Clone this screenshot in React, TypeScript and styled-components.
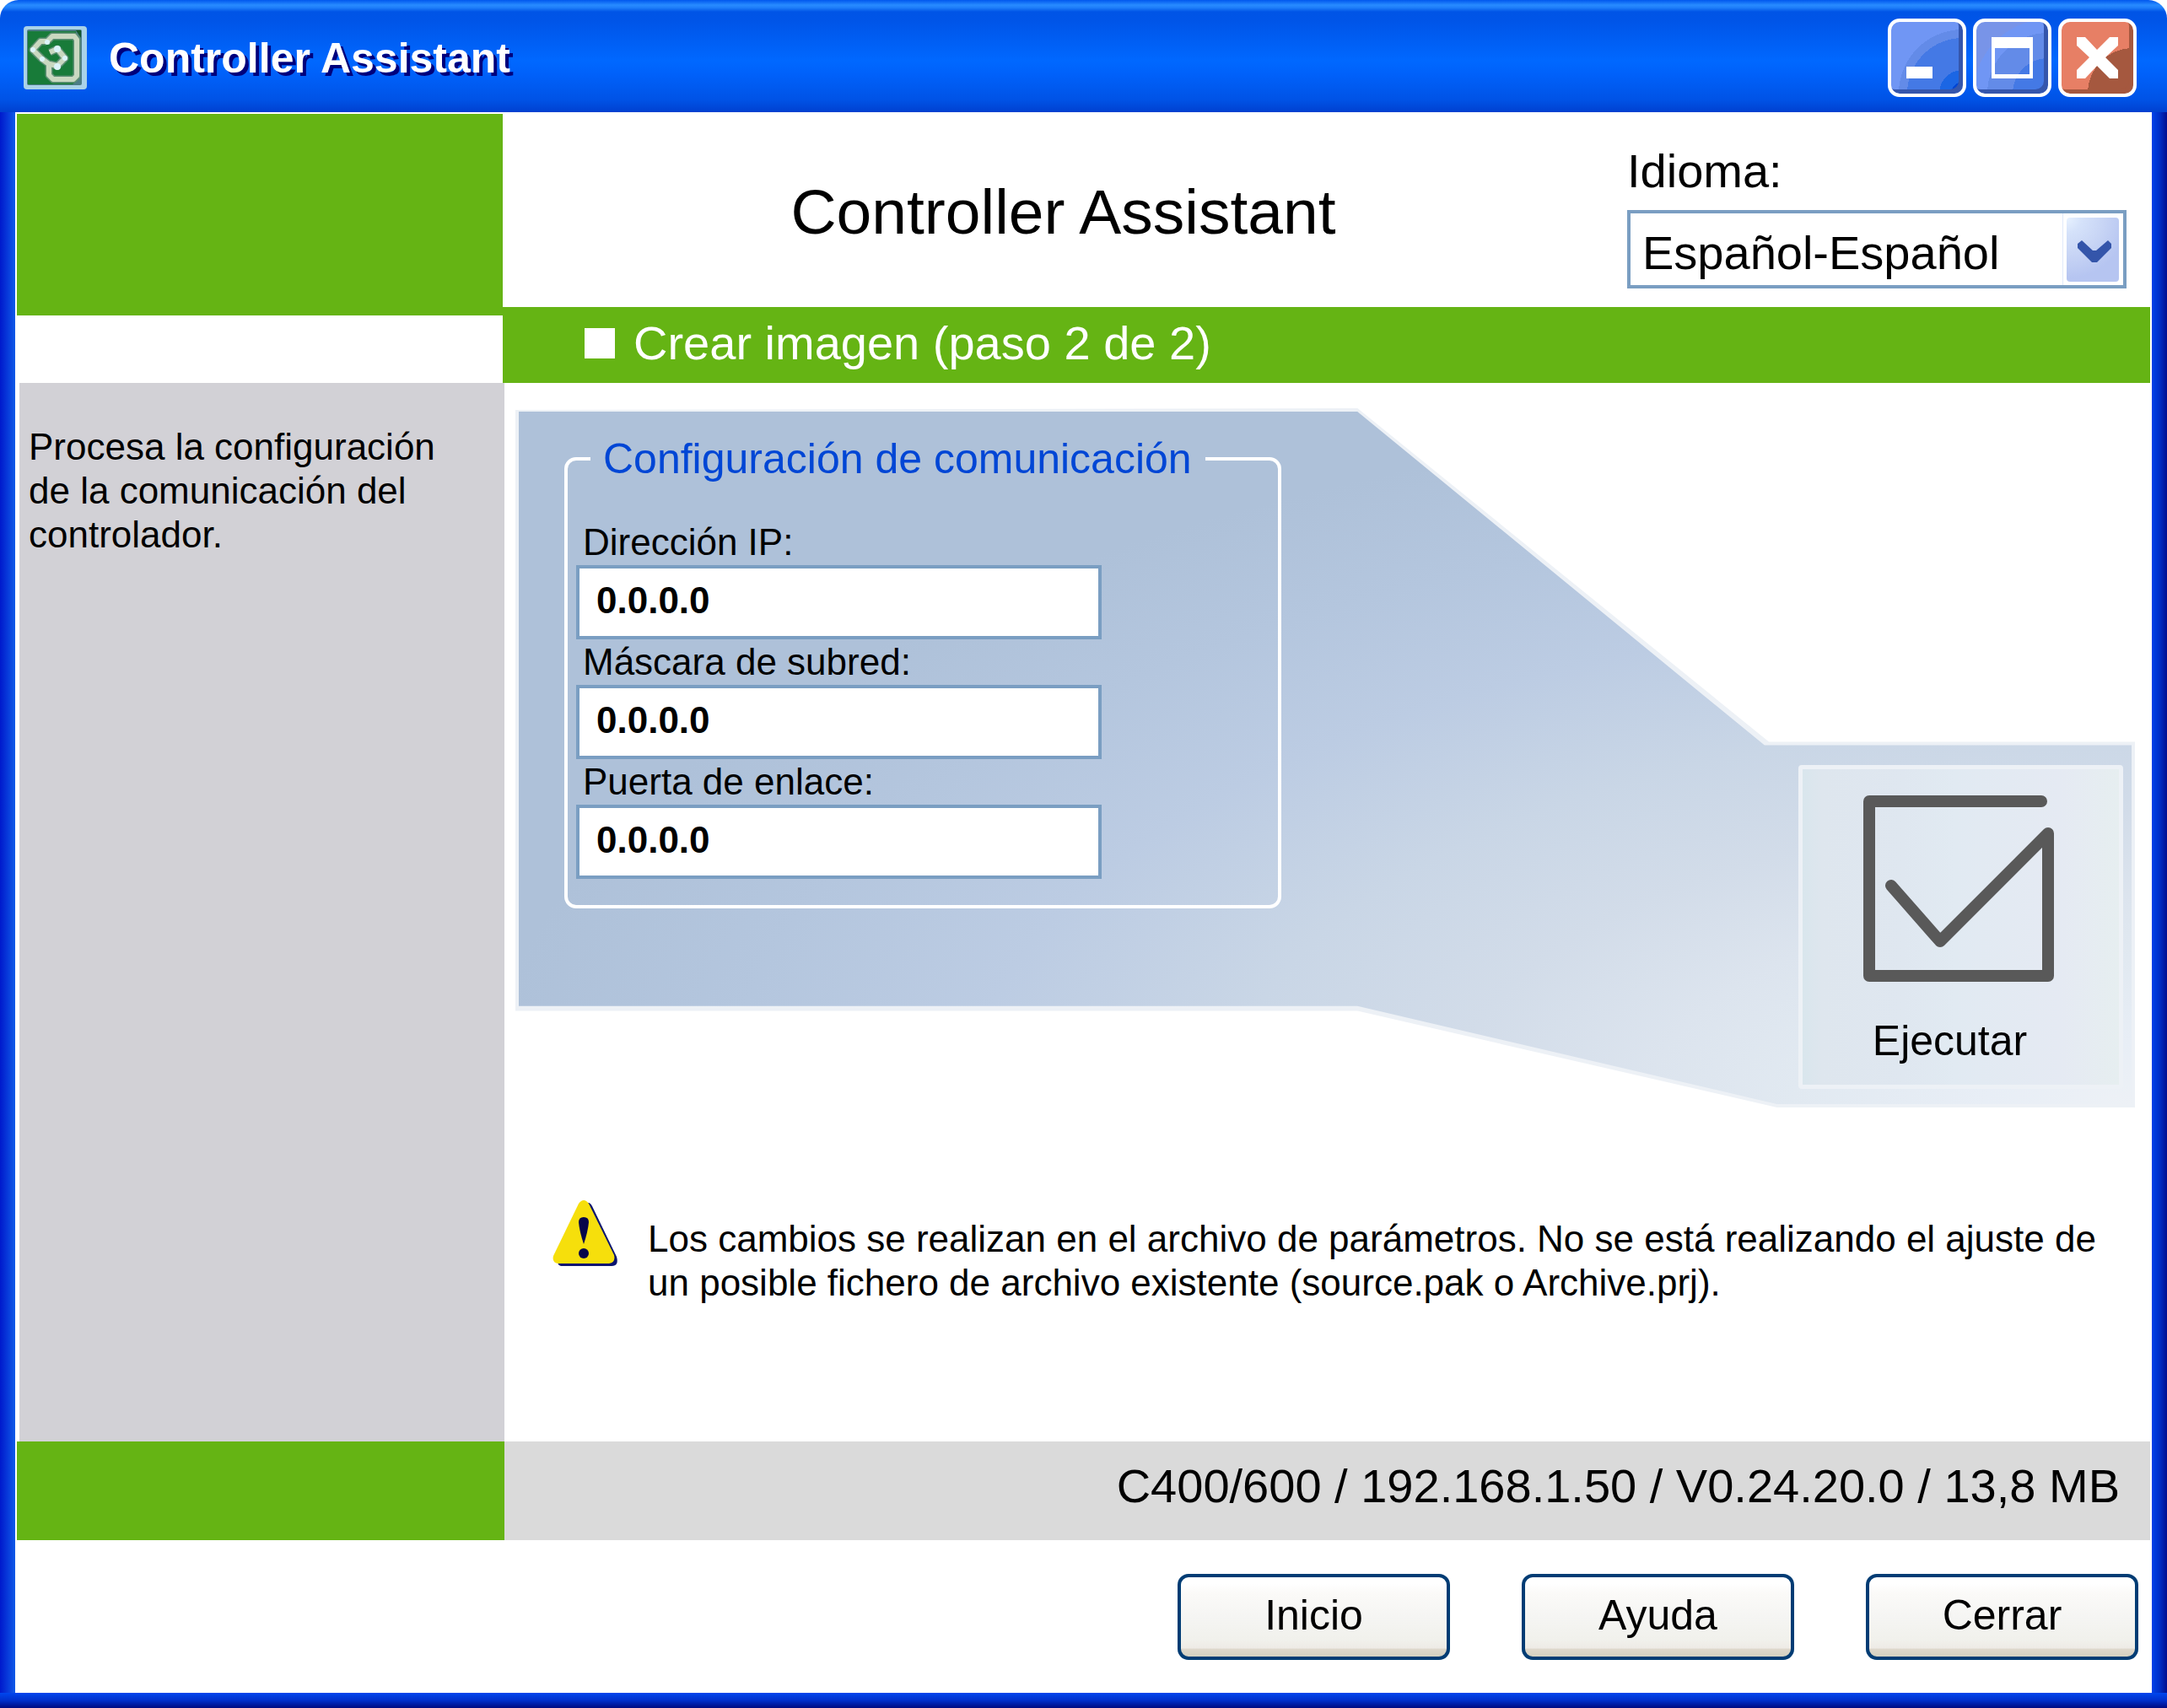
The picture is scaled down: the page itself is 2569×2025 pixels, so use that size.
import React, { useState } from "react";
import styled, { createGlobalStyle } from "styled-components";

const color = {
  green: "#65b414",
  sidebar: "#d2d1d6",
  status: "#dadada",
  fieldBorder: "#7a9ec2",
  legend: "#0046d5",
  buttonBorder: "#003c74",
  panelEdge: "#edf1f6",
};

const GlobalStyle = createGlobalStyle`
  *, *::before, *::after { box-sizing: border-box; }
  body {
    margin: 0;
    background: #fff;
    color: #000;
    font-family: "Liberation Sans", Arial, sans-serif;
    font-size: 44px;
    line-height: 52px;
  }
  button, input, select { font-family: inherit; color: inherit; }
`;

const Window = styled.div`
  display: flex;
  flex-direction: column;
  min-height: 100vh;
`;

const TitleBar = styled.header`
  display: flex;
  align-items: center;
  height: 133px;
  padding: 4px 36px 0 28px;
  border-radius: 22px 22px 0 0;
  background: linear-gradient(
    to bottom,
    #0057ee 0,
    #288bff 6px,
    #1f7ffa 9px,
    #0054e6 14px,
    #0055e8 26px,
    #0068ff 72px,
    #0061fa 88px,
    #0053e6 118px,
    #0040d0 133px
  );
`;

const WindowTitle = styled.div`
  flex: 1;
  margin-left: 26px;
  color: #fff;
  font-size: 50px;
  font-weight: bold;
  line-height: 56px;
  text-shadow: 4px 4px 0 #00007c;
`;

const WindowControls = styled.div`
  display: flex;
  gap: 8px;
`;

const controlFill = {
  minimize:
    "radial-gradient(circle at 100% 100%, #0046d5 0 14px, #1b66e4 14px 28px, #4479e5 28px 66px, #638be8 66px 76px, #7096f4 76px)",
  maximize:
    "radial-gradient(circle at 100% 100%, #4479e5 0 42px, #638be8 42px 72px, #7096f4 72px 88px, #7894e8 88px)",
  close: "radial-gradient(circle at 100% 100%, #a5583f 0 54px, #e77f65 54px)",
};

const ControlButton = styled.button<{ $kind: keyof typeof controlFill }>`
  width: 93px;
  height: 93px;
  padding: 0;
  border: 4px solid #fff;
  border-radius: 14px;
  background: ${(p) => controlFill[p.$kind]};
  box-shadow: inset -5px -5px 0 ${(p) => (p.$kind === "close" ? "#a5583f" : "#3556ac")};

  svg { display: block; }
`;

const Frame = styled.div`
  flex: 1;
  display: flex;
  flex-direction: column;
  padding: 0 18px 18px;
  background:
    linear-gradient(to bottom, #0046ee, #0030cc 50%, #000a80) bottom / 100% 18px no-repeat,
    linear-gradient(to right, #0019cc, #0f5ae8) left / 18px 100% no-repeat,
    linear-gradient(to right, #0042ea, #0030c8 50%, #000f90) right / 18px 100% no-repeat;
`;

const Client = styled.div`
  flex: 1;
  display: flex;
  flex-direction: column;
  padding: 2px 2px 0;
  background: #fff;
`;

const HeaderRow = styled.div`
  display: grid;
  grid-template-columns: 576px 1fr;
`;

const BrandBlock = styled.div`
  height: 239px;
  background: ${color.green};
`;

const HeaderTop = styled.div`
  display: flex;
  align-items: flex-start;
  height: 229px;
  padding: 36px 28px 0 0;
`;

const Heading = styled.h1`
  flex: 1;
  margin: 38px 4px 0 0;
  font-size: 75px;
  font-weight: normal;
  line-height: 84px;
  text-align: center;
`;

const Language = styled.div`
  width: 592px;
`;

const LanguageLabel = styled.label`
  display: block;
  margin-bottom: 14px;
  font-size: 56px;
  line-height: 64px;
`;

const SelectBox = styled.div`
  position: relative;

  svg {
    position: absolute;
    top: 4px;
    right: 4px;
    pointer-events: none;
  }
`;

const Select = styled.select`
  display: block;
  width: 100%;
  height: 93px;
  padding: 8px 80px 0 14px;
  border: 4px solid ${color.fieldBorder};
  border-radius: 0;
  background: #fff;
  font-size: 56px;
  appearance: none;
`;

const StepBar = styled.h2`
  display: flex;
  align-items: center;
  gap: 22px;
  height: 90px;
  margin: 0;
  padding: 0 0 4px 97px;
  background: ${color.green};
  color: #fff;
  font-size: 56px;
  font-weight: normal;
  line-height: 64px;

  &::before {
    content: "";
    width: 36px;
    height: 36px;
    background: #fff;
  }
`;

const MainRow = styled.div`
  flex: 1;
  display: grid;
  grid-template-columns: 578px 1fr;
`;

const Sidebar = styled.aside`
  margin-left: 3px;
  padding: 50px 40px 50px 11px;
  background: ${color.sidebar};
`;

const Paragraph = styled.p`
  margin: 0;
`;

const Content = styled.main`
  padding: 30px 18px 40px 13px;
`;

const Panel = styled.form`
  display: flex;
  min-height: 829px;
  padding: 4px;
  background: ${color.panelEdge};
  clip-path: polygon(
    0 2px, 52% 0, 77.4% 47.7%, 100% 47.7%,
    100% 100%, 77.9% 100%, 52% 86.2%, 0 86.2%
  );
`;

const PanelFill = styled.div`
  flex: 1;
  display: flex;
  justify-content: space-between;
  padding: 28px 10px 18px 54px;
  background: radial-gradient(
    ellipse 100% 100% at 100% 100%,
    #edf1f6 0,
    #e8eef6 9%,
    #e1e9f1 21%,
    #dce4ee 30%,
    #d2dce9 42%,
    #c9d6e6 56%,
    #bccce3 72%,
    #b4c6de 87%,
    #aec1d9 102%
  );
  clip-path: polygon(
    0 0, 52% 0, calc(77.4% - 3px) calc(47.7% + 4px), 100% calc(47.7% + 4px),
    100% 100%, 78% 100%, 52% calc(86.2% - 3px), 0 calc(86.2% - 3px)
  );
`;

const Fieldset = styled.fieldset`
  align-self: flex-start;
  width: 850px;
  min-width: 0;
  margin: 0;
  padding: 44px 10px 31px;
  border: 4px solid #fff;
  border-radius: 14px;
`;

const Legend = styled.legend`
  margin-left: 17px;
  padding: 0 16px 0 15px;
  color: ${color.legend};
  font-size: 50px;
  line-height: 56px;
`;

const FieldLabel = styled.label`
  display: block;
  padding-left: 8px;
  line-height: 54px;
`;

const TextInput = styled.input`
  display: block;
  width: 623px;
  height: 88px;
  padding: 0 20px 4px;
  border: 4px solid ${color.fieldBorder};
  border-radius: 0;
  background: #fff;
  font-size: 44px;
  font-weight: bold;
`;

const ExecuteButton = styled.button`
  align-self: flex-end;
  display: flex;
  flex-direction: column;
  align-items: center;
  width: 385px;
  height: 384px;
  padding: 31px 6px 0 0;
  border: 5px solid ${color.panelEdge};
  border-radius: 4px;
  background: linear-gradient(to right, #d9e6ed 0, #dee6ee 6%, #dfe7f0 32%, #e1eaf2 48%, #e5eaf3 82%, #e6eef0 100%);
  font-size: 50px;
  line-height: 56px;
`;

const ExecuteLabel = styled.span`
  margin-top: 42px;
  padding-right: 20px;
`;

const Notice = styled.div`
  display: flex;
  gap: 34px;
  margin: 109px 20px 0 44px;

  svg { flex: none; }

  ${Paragraph} { padding-top: 21px; }
`;

const StatusRow = styled.footer`
  display: grid;
  grid-template-columns: 578px 1fr;
  height: 117px;
  background: ${color.green};
`;

const StatusText = styled.div`
  display: flex;
  align-items: center;
  justify-content: flex-end;
  padding: 0 36px 12px 0;
  background: ${color.status};
  font-size: 56px;
  line-height: 64px;
`;

const ButtonRow = styled.div`
  display: flex;
  justify-content: flex-end;
  gap: 85px;
  padding: 40px 14px 39px;
`;

const PushButton = styled.button`
  width: 323px;
  height: 102px;
  padding: 0 0 5px;
  border: 4px solid ${color.buttonBorder};
  border-radius: 13px;
  background: linear-gradient(
    to bottom,
    #fff 0,
    #fff 8%,
    #fbfaf8 20%,
    #f5f5f3 50%,
    #f1f1ec 78%,
    #eeebe6 89%,
    #ddd7cb 91%,
    #d4d0c0 100%
  );
  font-size: 50px;
  line-height: 56px;
`;

const arrowLine =
  "M27 19L34 12H60L63 16V59L59 63H35L30 58V45L22 39L11 28L20 18H27M31 31L40 27L49 38L40 47L31 45";

const AppIcon = () => (
  <svg width="75" height="75" viewBox="0 0 75 75" fill="none" aria-hidden="true">
    <rect x="0" y="0" width="75" height="75" rx="4" fill="#a9d2e8" />
    <rect x="4" y="4" width="65" height="66" rx="2" fill="#4c7d86" />
    <path d="M5 6H62V66L58 69H5Z" fill="#187b39" />
    <path d="M62 5H68V14Z" fill="#12592c" />
    <path d={arrowLine} stroke="#5d8f74" strokeWidth="9" strokeLinejoin="round" />
    <path d={arrowLine} stroke="#c9d8c0" strokeWidth="6" strokeLinejoin="round" />
    <g fill="#dcf4fa">
      <circle cx="28" cy="19" r="3" />
      <circle cx="11" cy="28" r="3" />
      <circle cx="22" cy="39" r="3" />
      <circle cx="40" cy="27" r="4" />
      <circle cx="49" cy="38" r="3" />
      <circle cx="40" cy="48" r="4" />
    </g>
  </svg>
);

const ControlGlyph = ({ d }: { d: string }) => (
  <svg width="85" height="85" viewBox="0 0 85 85" aria-hidden="true">
    <path d={d} fill="#fff" fillRule="evenodd" />
  </svg>
);

const SelectArrow = () => (
  <svg width="72" height="85" viewBox="0 0 72 85" aria-hidden="true">
    <defs>
      <radialGradient id="arrowFill" gradientUnits="userSpaceOnUse" cx="5" cy="5" r="72">
        <stop offset="0" stopColor="#e8f2ff" />
        <stop offset="0.25" stopColor="#d5e2fa" />
        <stop offset="0.6" stopColor="#c8d5f5" />
        <stop offset="1" stopColor="#b6c5f1" />
      </radialGradient>
    </defs>
    <rect width="72" height="85" fill="#fff" />
    <rect width="1" height="85" fill="#e0eafa" />
    <rect x="5" y="5" width="62" height="76" rx="4" fill="url(#arrowFill)" />
    <path d="M18 36L23 32L36 44H40L54 32L58 36V41L41 58H35L18 41Z" fill="#3455aa" />
  </svg>
);

const CheckIcon = () => (
  <svg width="226" height="221" viewBox="0 0 226 221" fill="none" aria-hidden="true">
    <path
      d="M211 7H7V214H219V45L91 173L33 107"
      stroke="#595959"
      strokeWidth="14"
      strokeLinecap="round"
      strokeLinejoin="round"
    />
  </svg>
);

const WarningIcon = () => (
  <svg width="79" height="80" viewBox="0 0 79 80" aria-hidden="true">
    <path d="M40 6Q43 1 47 8L76 68Q79 79 70 79H10Q4 78 8 70Z" fill="#0a1470" />
    <path d="M31 5Q37 -3 43 5L73 66Q75 75 67 76H7Q-1 75 1 67Z" fill="#f6df0c" />
    <path d="M31 27Q31 21 37 21Q43 21 43 27Q42 38 37 53Q32 38 31 27Z" fill="#06064a" />
    <circle cx="37" cy="64" r="6" fill="#06064a" />
  </svg>
);

const fields = [
  { id: "ip", label: "Dirección IP:" },
  { id: "mask", label: "Máscara de subred:" },
  { id: "gateway", label: "Puerta de enlace:" },
];

export default function App() {
  const [values, setValues] = useState<Record<string, string>>({
    ip: "0.0.0.0",
    mask: "0.0.0.0",
    gateway: "0.0.0.0",
  });

  return (
    <>
      <GlobalStyle />
      <Window>
        <TitleBar>
          <AppIcon />
          <WindowTitle>Controller Assistant</WindowTitle>
          <WindowControls>
            <ControlButton type="button" $kind="minimize" aria-label="Minimizar">
              <ControlGlyph d="M18 53H49V67H18Z" />
            </ControlButton>
            <ControlButton type="button" $kind="maximize" aria-label="Maximizar">
              <ControlGlyph d="M18 18H67V67H18ZM22 31V62H63V31Z" />
            </ControlButton>
            <ControlButton type="button" $kind="close" aria-label="Cerrar ventana">
              <ControlGlyph d="M18 18H28L42 33L57 18H67V28L52 42L67 57V67H57L42 52L28 67H18V57L33 42L18 28Z" />
            </ControlButton>
          </WindowControls>
        </TitleBar>

        <Frame>
          <Client>
            <HeaderRow>
              <BrandBlock />
              <div>
                <HeaderTop>
                  <Heading>Controller Assistant</Heading>
                  <Language>
                    <LanguageLabel htmlFor="language">Idioma:</LanguageLabel>
                    <SelectBox>
                      <Select id="language" defaultValue="es">
                        <option value="es">Español-Español</option>
                      </Select>
                      <SelectArrow />
                    </SelectBox>
                  </Language>
                </HeaderTop>
                <StepBar>Crear imagen (paso 2 de 2)</StepBar>
              </div>
            </HeaderRow>

            <MainRow>
              <Sidebar>
                <Paragraph>Procesa la configuración de la comunicación del controlador.</Paragraph>
              </Sidebar>
              <Content>
                <Panel onSubmit={(e) => e.preventDefault()}>
                  <PanelFill>
                    <Fieldset>
                      <Legend>Configuración de comunicación</Legend>
                      {fields.map((f) => (
                        <div key={f.id}>
                          <FieldLabel htmlFor={f.id}>{f.label}</FieldLabel>
                          <TextInput
                            id={f.id}
                            type="text"
                            value={values[f.id]}
                            onChange={(e) => setValues({ ...values, [f.id]: e.target.value })}
                          />
                        </div>
                      ))}
                    </Fieldset>
                    <ExecuteButton type="submit">
                      <CheckIcon />
                      <ExecuteLabel>Ejecutar</ExecuteLabel>
                    </ExecuteButton>
                  </PanelFill>
                </Panel>
                <Notice role="note">
                  <WarningIcon />
                  <Paragraph>
                    Los cambios se realizan en el archivo de parámetros. No se está realizando el ajuste de un
                    posible fichero de archivo existente (source.pak o Archive.prj).
                  </Paragraph>
                </Notice>
              </Content>
            </MainRow>

            <StatusRow>
              <div />
              <StatusText>C400/600 / 192.168.1.50 / V0.24.20.0 / 13,8 MB</StatusText>
            </StatusRow>

            <ButtonRow>
              <PushButton type="button">Inicio</PushButton>
              <PushButton type="button">Ayuda</PushButton>
              <PushButton type="button">Cerrar</PushButton>
            </ButtonRow>
          </Client>
        </Frame>
      </Window>
    </>
  );
}
